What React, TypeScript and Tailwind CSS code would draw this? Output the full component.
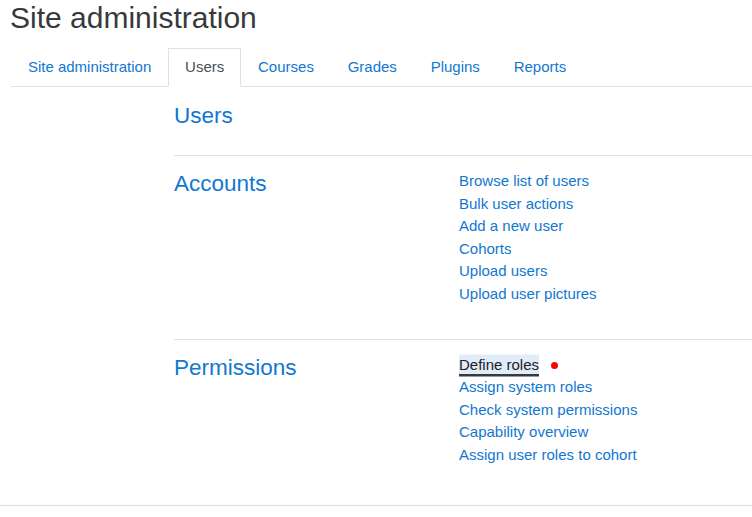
import React from "react";

const tabs = ["Site administration", "Users", "Courses", "Grades", "Plugins", "Reports"];

const accounts = [
  "Browse list of users",
  "Bulk user actions",
  "Add a new user",
  "Cohorts",
  "Upload users",
  "Upload user pictures",
];

const permissions = [
  "Assign system roles",
  "Check system permissions",
  "Capability overview",
  "Assign user roles to cohort",
];

export default function App() {
  return (
    <div className="w-[752px] h-[517px] overflow-hidden bg-white font-['Liberation_Sans',Arial,sans-serif]">
      <h2 className="pl-[10px] m-0 text-[30px] leading-[36px] text-[#373a3c] font-normal">Site administration</h2>

      <nav className="ml-[11px] mt-[12px] flex border-b border-[#dee2e6]">
        {tabs.map((t) => (
          <div
            key={t}
            className={
              t === "Users"
                ? "px-[15.9px] pt-[7px] pb-[7.5px] -mb-px border border-[#dee2e6] border-b-white bg-white text-[15px] leading-[22.5px] text-[#495057]"
                : "px-[15.9px] pt-[7px] pb-[7.5px] -mb-px border border-transparent text-[15px] leading-[22.5px] text-[#1177d1]"
            }
          >
            {t}
          </div>
        ))}
      </nav>

      <div className="pl-[174px]">
        <h3 className="mt-[15px] text-[22.5px] leading-[27px] text-[#1177d1] font-normal">Users</h3>
        <div className="mt-[25.5px] border-t border-[#dee2e6]" />

        <div className="grid grid-cols-[285px_1fr] pt-[14.5px] pb-[33.5px]">
          <h3 className="text-[22.5px] leading-[27px] text-[#1177d1] font-normal">Accounts</h3>
          <ul className="text-[15px] leading-[22.5px] text-[#1177d1]">
            {accounts.map((a) => (
              <li key={a}>{a}</li>
            ))}
          </ul>
        </div>
        <div className="border-t border-[#dee2e6]" />

        <div className="grid grid-cols-[285px_1fr] pt-[14px] pb-[38.5px]">
          <h3 className="text-[22.5px] leading-[27px] text-[#1177d1] font-normal">Permissions</h3>
          <ul className="text-[15px] leading-[22.5px] text-[#1177d1]">
            <li>
              <span className="bg-[#e0ecf8] text-[#1d2125] shadow-[0_-1.5px_0_#e0ecf8,0_1px_0_#e0ecf8,0_3.5px_0_#343a40]">Define roles</span><span className="ml-[11.5px] inline-block align-middle relative -top-[0.5px] w-[7px] h-[7px] rounded-full bg-[#ff0000]" />
            </li>
            {permissions.map((a) => (
              <li key={a}>{a}</li>
            ))}
          </ul>
        </div>
      </div>
      <div className="border-t border-[#dcdcdc]" />
    </div>
  );
}
